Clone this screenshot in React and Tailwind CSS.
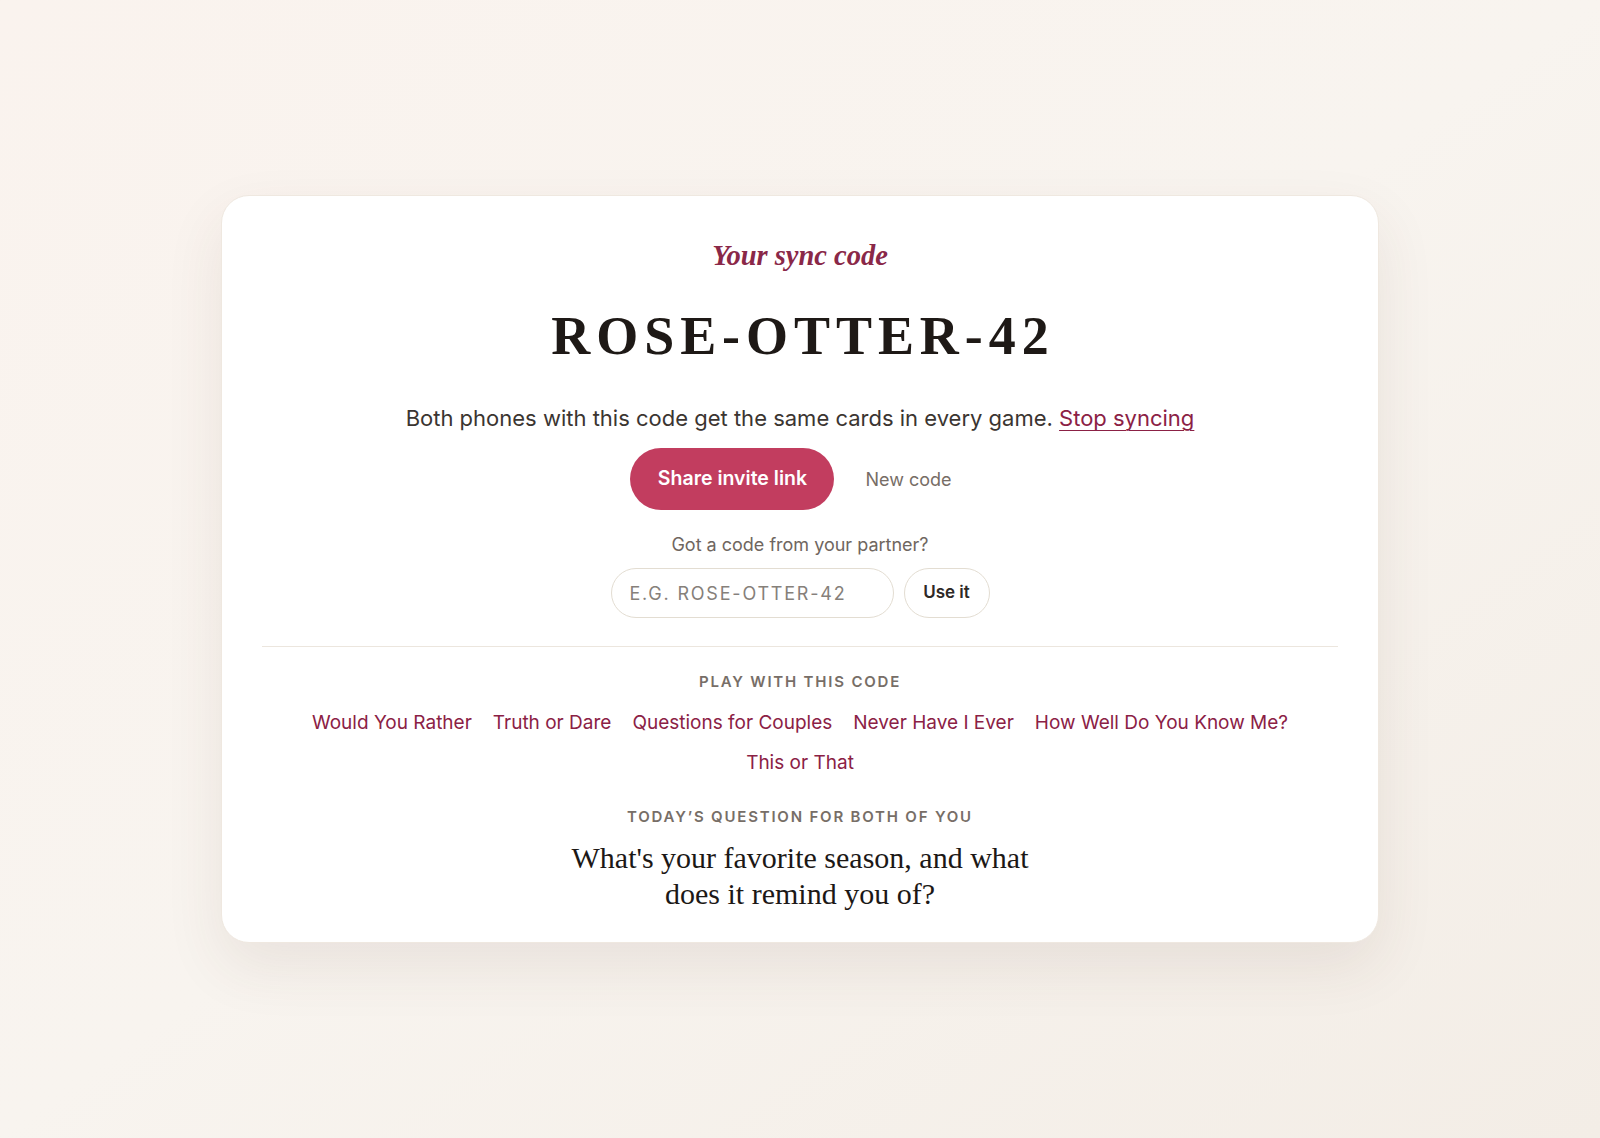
const games = [
  'Would You Rather',
  'Truth or Dare',
  'Questions for Couples',
  'Never Have I Ever',
  'How Well Do You Know Me?',
  'This or That',
]

const style = {
  page: `min-h-screen w-full flex items-center justify-center bg-linear-to-br from-[#faf3ee] via-[#f8f4ef] to-[#f3ede6] font-['Inter',sans-serif]`,
  card: `w-[1158px] bg-white rounded-[28px] border border-[#efe8e0] shadow-[0_24px_60px_rgba(90,60,40,0.09)] px-10 pt-11 pb-[30px] flex flex-col items-center text-center`,
  kicker: `font-['Liberation_Serif',serif] italic font-bold text-[28.5px] leading-[32px] text-[#8a2848]`,
  code: `mt-[34px] pl-[0.11em] font-['Liberation_Serif',serif] font-bold text-[54px] leading-[60px] tracking-[0.11em] text-[#1e1916]`,
  body: `mt-[37px] text-[22px] leading-[30px] text-[#3b3531]`,
  link: `text-[#8b2145] underline underline-offset-4 decoration-1`,
  share: `h-[62px] w-[204px] rounded-full bg-[#c23d5f] text-white text-[19.5px] font-semibold`,
  ghost: `pl-[31px] pr-[18px] h-[62px] text-[18px] text-[#776d66]`,
  label: `text-[15px] leading-[20px] font-semibold tracking-[0.12em] uppercase text-[#776e67]`,
}

export default function App() {
  return (
    <div className={style.page}>
      <div className={style.card}>
        <div className={style.kicker}>Your sync code</div>
        <div className={style.code}>ROSE-OTTER-42</div>

        <p className={style.body}>
          Both phones with this code get the same cards in every game.{' '}
          <a className={style.link}>Stop syncing</a>
        </p>

        <div className="mt-[15px] flex items-center">
          <button className={style.share}>Share invite link</button>
          <button className={style.ghost}>New code</button>
        </div>

        <div className="mt-[22px] text-[18px] leading-[26px] text-[#6f6660]">
          Got a code from your partner?
        </div>
        <div className="mt-[10px] flex items-center gap-[10px]">
          <input
            placeholder="E.G. ROSE-OTTER-42"
            className="h-[50px] w-[283px] rounded-full border border-[#e3ddd2] px-[18px] text-[18px] tracking-[0.1em] uppercase text-[#3b3531] placeholder:text-[#86807a] outline-none"
          />
          <button className="h-[50px] w-[86px] rounded-full border border-[#e3ddd2] text-[17px] font-semibold text-[#2e2926]">
            Use it
          </button>
        </div>

        <div className="mt-[28px] h-px w-full bg-[#ece6de]" />

        <div className={`mt-[25px] ${style.label}`}>Play with this code</div>
        <div className="mt-[17px] flex flex-wrap justify-center gap-x-[21px] gap-y-[12px] max-w-[1000px]">
          {games.map((g, id) => (
            <a key={id} className="text-[19px] leading-[28px] text-[#8b2145]">
              {g}
            </a>
          ))}
        </div>

        <div className={`mt-[30px] ${style.label}`}>Today’s question for both of you</div>
        <div className="mt-[13px] max-w-[480px] font-['Liberation_Serif',serif] text-[30px] leading-[36px] text-[#1c1816]">
          What's your favorite season, and what does it remind you of?
        </div>
      </div>
    </div>
  )
}
